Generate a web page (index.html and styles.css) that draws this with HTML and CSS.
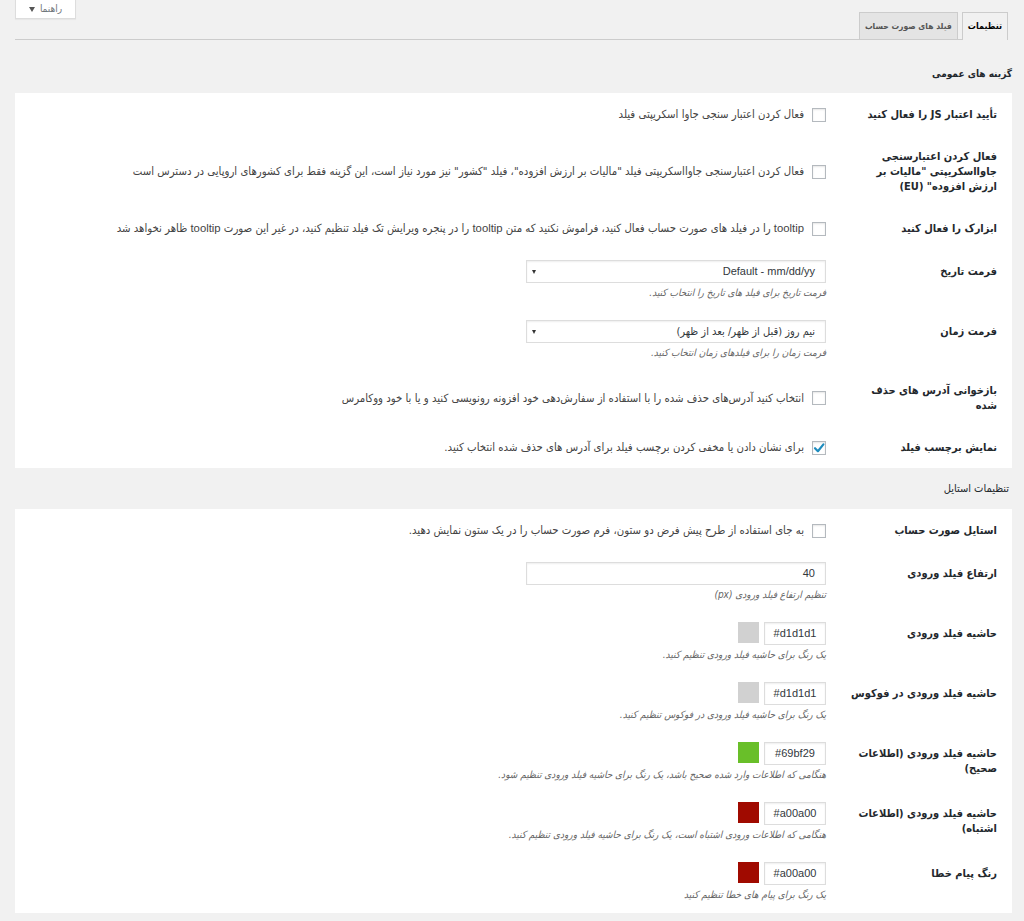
FILE: index.html
```html
<!DOCTYPE html>
<html lang="fa" dir="rtl">
<head>
<meta charset="utf-8">
<title>تنظیمات</title>
<link rel="stylesheet" href="styles.css">
</head>
<body>
<div class="wrap">
  <div class="topbar">
    <nav class="tabs">
      <a class="tab active">تنظیمات</a>
      <a class="tab">فیلد های صورت حساب</a>
    </nav>
    <div class="help"><span>راهنما</span><span class="caret"></span></div>
  </div>

  <h2 class="section-title first">گزینه های عمومی</h2>
  <div class="panel">
    <div class="row check-row">
      <div class="th">تأیید اعتبار JS را فعال کنید</div>
      <div class="td"><label class="cb"><span class="box"></span><span>فعال کردن اعتبار سنجی جاوا اسکریپتی فیلد</span></label></div>
    </div>
    <div class="row check-row">
      <div class="th">فعال کردن اعتبارسنجی<br>جاوااسکریپتی "مالیات بر<br>ارزش افزوده" (EU)</div>
      <div class="td"><label class="cb"><span class="box"></span><span>فعال کردن اعتبارسنجی جاوااسکریپتی فیلد "مالیات بر ارزش افزوده"، فیلد "کشور" نیز مورد نیاز است، این گزینه فقط برای کشورهای اروپایی در دسترس است</span></label></div>
    </div>
    <div class="row check-row">
      <div class="th">ابزارک را فعال کنید</div>
      <div class="td"><label class="cb"><span class="box"></span><span><span class="lat">tooltip</span> را در فیلد های صورت حساب فعال کنید، فراموش نکنید که متن <span class="lat">tooltip</span> را در پنجره ویرایش تک فیلد تنظیم کنید، در غیر این صورت <span class="lat">tooltip</span> ظاهر نخواهد شد</span></label></div>
    </div>
    <div class="row input-row">
      <div class="th">فرمت تاریخ</div>
      <div class="td">
        <div class="select"><span class="lat" dir="ltr">Default - mm/dd/yy</span><span class="arrow"></span></div>
        <p class="desc">فرمت تاریخ برای فیلد های تاریخ را انتخاب کنید.</p>
      </div>
    </div>
    <div class="row input-row">
      <div class="th">فرمت زمان</div>
      <div class="td">
        <div class="select"><span>نیم روز (قبل از ظهر/ بعد از ظهر)</span><span class="arrow"></span></div>
        <p class="desc">فرمت زمان را برای فیلدهای زمان انتخاب کنید.</p>
      </div>
    </div>
    <div class="row check-row">
      <div class="th">بازخوانی آدرس های حذف<br>شده</div>
      <div class="td"><label class="cb"><span class="box"></span><span>انتخاب کنید آدرس‌های حذف شده را با استفاده از سفارش‌دهی خود افزونه رونویسی کنید و یا با خود ووکامرس</span></label></div>
    </div>
    <div class="row check-row">
      <div class="th">نمایش برچسب فیلد</div>
      <div class="td"><label class="cb"><span class="box checked"><svg viewBox="0 0 14 14" width="14" height="14"><path d="M3 7.2 L5.9 10.2 L11.4 3.4" fill="none" stroke="#1e8cbe" stroke-width="2.2" stroke-linecap="round" stroke-linejoin="round"/></svg></span><span>برای نشان دادن یا مخفی کردن برچسب فیلد برای آدرس های حذف شده انتخاب کنید.</span></label></div>
    </div>
  </div>

  <h2 class="section-title second">تنظیمات استایل</h2>
  <div class="panel last">
    <div class="row check-row">
      <div class="th">استایل صورت حساب</div>
      <div class="td"><label class="cb"><span class="box"></span><span>به جای استفاده از طرح پیش فرض دو ستون، فرم صورت حساب را در یک ستون نمایش دهید.</span></label></div>
    </div>
    <div class="row input-row">
      <div class="th">ارتفاع فیلد ورودی</div>
      <div class="td">
        <div class="text-input"><span class="lat">40</span></div>
        <p class="desc">تنظیم ارتفاع فیلد ورودی (px)</p>
      </div>
    </div>
    <div class="row input-row">
      <div class="th">حاشیه فیلد ورودی</div>
      <div class="td">
        <div class="color"><span class="hex lat" dir="ltr">#d1d1d1</span><span class="swatch" style="background:#d1d1d1"></span></div>
        <p class="desc">یک رنگ برای حاشیه فیلد ورودی تنظیم کنید.</p>
      </div>
    </div>
    <div class="row input-row">
      <div class="th">حاشیه فیلد ورودی در فوکوس</div>
      <div class="td">
        <div class="color"><span class="hex lat" dir="ltr">#d1d1d1</span><span class="swatch" style="background:#d1d1d1"></span></div>
        <p class="desc">یک رنگ برای حاشیه فیلد ورودی در فوکوس تنظیم کنید.</p>
      </div>
    </div>
    <div class="row input-row">
      <div class="th">حاشیه فیلد ورودی (اطلاعات<br>صحیح)</div>
      <div class="td">
        <div class="color"><span class="hex lat" dir="ltr">#69bf29</span><span class="swatch" style="background:#69bf29"></span></div>
        <p class="desc">هنگامی که اطلاعات وارد شده صحیح باشد، یک رنگ برای حاشیه فیلد ورودی تنظیم شود.</p>
      </div>
    </div>
    <div class="row input-row">
      <div class="th">حاشیه فیلد ورودی (اطلاعات<br>اشتباه)</div>
      <div class="td">
        <div class="color"><span class="hex lat" dir="ltr">#a00a00</span><span class="swatch" style="background:#a00a00"></span></div>
        <p class="desc">هنگامی که اطلاعات ورودی اشتباه است، یک رنگ برای حاشیه فیلد ورودی تنظیم کنید.</p>
      </div>
    </div>
    <div class="row input-row">
      <div class="th">رنگ پیام خطا</div>
      <div class="td">
        <div class="color"><span class="hex lat" dir="ltr">#a00a00</span><span class="swatch" style="background:#a00a00"></span></div>
        <p class="desc">یک رنگ برای پیام های خطا تنظیم کنید</p>
      </div>
    </div>
  </div>
</div>
</body>
</html>
```

FILE: styles.css
```css
html, body {
  margin: 0;
  padding: 0;
  background: #f1f1f1;
  overflow: hidden;
}
body {
  font-family: "DejaVu Sans Condensed", "DejaVu Sans", sans-serif;
  font-size: 11px;
  color: #444;
}
.lat {
  font-family: "Liberation Sans", "DejaVu Sans", sans-serif;
}
.wrap {
  margin: 0 12px 0 15px;
}

/* top bar */
.topbar {
  box-sizing: border-box;
  height: 40px;
  display: flex;
  justify-content: space-between;
  align-items: flex-start;
  border-bottom: 1px solid #ccc;
  margin-right: 4px;
}
.tabs {
  display: flex;
  gap: 4px;
  margin-top: 12px;
}
.tab {
  box-sizing: border-box;
  display: block;
  height: 27px;
  line-height: 26px;
  padding: 0 5px;
  border: 1px solid #ccc;
  border-bottom: none;
  background: #e4e4e4;
  font-size: 8.5px;
  font-weight: bold;
  color: #555;
}
.tab.active {
  height: 28px;
  padding: 0 5px;
  background: #f1f1f1;
  color: #000;
  font-size: 9px;
}
.help {
  box-sizing: border-box;
  width: 61px;
  height: 20px;
  margin-top: -1px;
  display: flex;
  align-items: center;
  justify-content: center;
  gap: 5px;
  background: #fff;
  border: 1px solid #ddd;
  border-top: none;
  box-shadow: 0 1px 1px rgba(0,0,0,.04);
  font-size: 10px;
  color: #72777c;
}
.caret {
  width: 0;
  height: 0;
  border-top: 5px solid #555;
  border-left: 3px solid transparent;
  border-right: 3px solid transparent;
  margin-top: 1px;
}

/* section titles */
.section-title {
  font-size: 11px;
  line-height: 15px;
  color: #23282d;
  margin: 0;
}
.section-title.first {
  font-size: 10px;
  font-weight: bold;
  margin: 26px 0 12px 0;
}
.section-title.second {
  font-weight: normal;
  margin: 13px 3px 13px 0;
}

/* panels */
.panel {
  background: #fff;
  padding: 0 15px 0 10px;
}
.panel.last {
  padding-bottom: 2px;
}
.row {
  display: grid;
  grid-template-columns: 150px 1fr;
  column-gap: 21px;
}
.th {
  font-weight: bold;
  font-size: 11px;
  line-height: 15px;
  color: #23282d;
  white-space: nowrap;
}
.check-row {
  padding: 14px 0 13px;
  align-items: center;
}
.input-row {
  padding: 11px 0 10px;
  align-items: start;
}
.input-row .th {
  padding-top: 4px;
}
.td {
  line-height: 15px;
}

/* checkbox */
.cb {
  display: flex;
  align-items: center;
  gap: 8px;
  white-space: nowrap;
  font-size: 11.3px;
}
.box {
  box-sizing: border-box;
  flex: none;
  width: 14px;
  height: 14px;
  border: 1px solid #b4b9be;
  background: #fff;
  box-shadow: inset 0 1px 2px rgba(0,0,0,.1);
  position: relative;
}
.box svg {
  position: absolute;
  top: -1px;
  right: -1px;
}

/* select and inputs */
.select {
  box-sizing: border-box;
  width: 300px;
  height: 23px;
  display: flex;
  align-items: center;
  justify-content: space-between;
  padding: 0 10px 0 5px;
  border: 1px solid #ddd;
  box-shadow: inset 0 1px 2px rgba(0,0,0,.07);
  background: #fff;
  font-size: 11px;
  color: #32373c;
}
.arrow {
  width: 0;
  height: 0;
  border-top: 4px solid #333;
  border-left: 2px solid transparent;
  border-right: 2px solid transparent;
}
.text-input {
  box-sizing: border-box;
  width: 300px;
  height: 23px;
  display: flex;
  align-items: center;
  padding: 0 10px;
  border: 1px solid #ddd;
  box-shadow: inset 0 1px 2px rgba(0,0,0,.07);
  background: #fff;
  font-size: 11px;
  color: #32373c;
}
.color {
  display: flex;
  align-items: flex-start;
  gap: 5px;
}
.hex {
  box-sizing: border-box;
  width: 62px;
  height: 23px;
  display: flex;
  align-items: center;
  justify-content: center;
  border: 1px solid #ddd;
  box-shadow: inset 0 1px 2px rgba(0,0,0,.07);
  background: #fff;
  font-size: 11px;
  color: #32373c;
}
.swatch {
  display: block;
  width: 21px;
  height: 21px;
}
.desc {
  margin: 3px 0 0;
  font-size: 10px;
  line-height: 13px;
  font-style: italic;
  color: #666;
  white-space: nowrap;
}
```
